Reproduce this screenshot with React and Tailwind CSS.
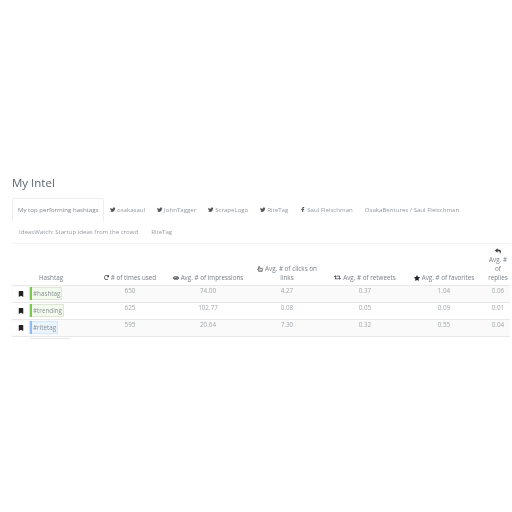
import { FaTwitter, FaFacebookF, FaBookmark, FaRedo, FaEye, FaRetweet, FaStar, FaReply, FaRegHandPointer } from 'react-icons/fa';

const topTabs = [
  { label: 'osakasaul', icon: FaTwitter },
  { label: 'JohnTagger', icon: FaTwitter },
  { label: 'ScrapeLogo', icon: FaTwitter },
  { label: 'RiteTag', icon: FaTwitter },
  { label: 'Saul Fleischman', icon: FaFacebookF },
  { label: 'OsakaBentures / Saul Fleischman' },
];

const rows = [
  { tag: '#hashtag', tagClass: 'border-[#dfe6d8] bg-[#f3fbef]', barClass: 'bg-[#7fc84f]', nums: ['650', '74.00', '4.27', '0.37', '1.04', '0.06'] },
  { tag: '#trending', tagClass: 'border-[#dfe6d8] bg-[#f3fbef]', barClass: 'bg-[#7fc84f]', nums: ['625', '102.77', '0.08', '0.05', '0.09', '0.01'] },
  { tag: '#ritetag', tagClass: 'border-[#d8e8f7] bg-[#eaf4fd]', barClass: 'bg-[#8fbdf0]', nums: ['595', '20.64', '7.30', '0.32', '0.55', '0.04'] },
];

function Tab({ tab }) {
  const Icon = tab.icon;
  return (
    <span className="flex items-center gap-[1.5px] px-[6px] whitespace-nowrap text-[#959aa0]">
      {Icon && <Icon className="text-[5.5px] text-[#555]" />}
      {tab.label}
    </span>
  );
}

export default function App() {
  return (
    <div className="min-h-[512px] bg-white pt-[175px] pl-[12px] pr-[2px] font-['Open_Sans',sans-serif] blur-[0.5px]">
      <h1 className="text-[11.5px] leading-[15px] text-[#5f656b]">My Intel</h1>

      <div className="mt-[8px] text-[6.1px] leading-[22px] border-b border-[#f1f1f1] h-[46px]">
        <div className="flex items-center h-[23px]">
          <span className="h-[23px] w-[92px] shrink-0 whitespace-nowrap border-l border-t border-r border-[#eeeeee] rounded-t-[2px] pl-[5px] text-[#81868c]">My top performing hashtags</span>
          <div className="flex">
            {topTabs.map(tab => <Tab key={tab.label} tab={tab} />)}
          </div>
        </div>
        <div className="flex items-center h-[22px] pl-[1px] gap-[1px]">
          <Tab tab={{ label: 'IdeasWatch: Startup ideas from the crowd' }} />
          <Tab tab={{ label: 'RiteTag' }} />
        </div>
      </div>

      <table className="mt-[1px] w-[498px] table-fixed border-collapse text-[6.3px] text-center">
        <colgroup>
          <col className="w-[78px]" />
          <col className="w-[80px]" />
          <col className="w-[76px]" />
          <col className="w-[82px]" />
          <col className="w-[74px]" />
          <col className="w-[84px]" />
          <col className="w-[24px]" />
        </colgroup>
        <thead>
          <tr className="h-[40px] text-[#7a7f85] leading-[9px] align-bottom">
            <th className="font-normal pb-[3px]">Hashtag</th>
            <th className="font-normal pb-[3px]"><FaRedo className="inline text-[5px] text-[#444] mr-[2px]" /># of times used</th>
            <th className="font-normal pb-[3px]"><FaEye className="inline text-[6px] text-[#444] mr-[2px]" />Avg. # of impressions</th>
            <th className="font-normal pb-[3px] px-[6px]"><FaRegHandPointer className="inline text-[6px] text-[#444] mr-[2px]" />Avg. # of clicks on links</th>
            <th className="font-normal pb-[3px]"><FaRetweet className="inline text-[7px] text-[#444] mr-[2px]" />Avg. # of retweets</th>
            <th className="font-normal pb-[3px]"><FaStar className="inline text-[6px] text-[#222] mr-[2px]" />Avg. # of favorites</th>
            <th className="font-normal pb-[3px]">
              <FaReply className="inline text-[6px] text-[#444]" />
              <br />Avg. # of replies
            </th>
          </tr>
        </thead>
        <tbody>
          {rows.map((row, i) => (
            <tr key={row.tag} className={`h-[17px] border-t border-[#e8e8e8] text-[#a3a8ad] align-top ${i % 2 === 0 ? 'bg-[#f9faf9]' : 'bg-white'}`}>
              <td className="p-0">
                <div className="flex items-center h-[16px] pl-[1px]">
                  <span className="flex items-center justify-center w-[15px] h-[14px] bg-white rounded-[1px]">
                    <FaBookmark className="text-[6px] text-[#222]" />
                  </span>
                  <span className={`ml-[1px] flex items-center h-[13px] border pr-[1px] leading-[11px] text-[#8b9197] ${row.tagClass}`}>
                    <span className={`w-[2px] h-[13px] mr-[1px] ${row.barClass}`} />
                    {row.tag}
                  </span>
                </div>
              </td>
              {row.nums.map((num, j) => (
                <td key={j} className="p-0 leading-[9px]">{num}</td>
              ))}
            </tr>
          ))}
          <tr className="h-px border-t border-[#e8e8e8]"><td colSpan={7} className="p-0"></td></tr>
        </tbody>
      </table>

      <div className="mt-px ml-[18px] w-[40px] h-px bg-[#e6e6e6]" />
    </div>
  );
}
